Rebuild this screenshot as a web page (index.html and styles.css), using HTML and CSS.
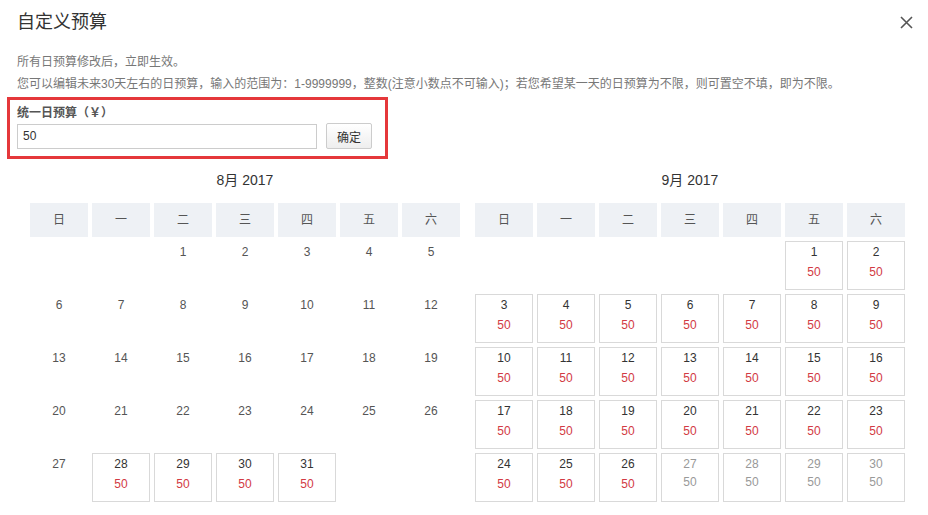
FILE: index.html
```
<!DOCTYPE html>
<html lang="zh-CN">
<head>
  <meta charset="UTF-8" />
  <title>自定义预算</title>
  <link rel="stylesheet" href="styles.css">
</head>
<body>

<div class="dialog">
  <header class="dialog-head">
    <h2>自定义预算</h2>
    <span class="close">
      <svg width="13" height="13" viewBox="0 0 13 13"><path d="M1 1 L12 12 M12 1 L1 12" stroke="#555" stroke-width="1.6" fill="none"/></svg>
    </span>
  </header>

  <p class="tip">所有日预算修改后，立即生效。</p>
  <p class="tip">您可以编辑未来30天左右的日预算，输入的范围为：1-9999999，整数(注意小数点不可输入)；若您希望某一天的日预算为不限，则可置空不填，即为不限。</p>

  <div class="unified">
    <div class="unified-label">统一日预算（￥）</div>
    <div class="unified-row">
      <input class="budget-input" type="text" value="50">
      <button class="btn">确定</button>
    </div>
  </div>

  <div class="months">
    <!-- August -->
    <div class="month">
      <div class="month-title">8月 2017</div>
      <div class="grid">
        <div class="wk">日</div><div class="wk">一</div><div class="wk">二</div><div class="wk">三</div><div class="wk">四</div><div class="wk">五</div><div class="wk">六</div>

        <div class="day"></div><div class="day"></div>
        <div class="day"><span class="num">1</span></div>
        <div class="day"><span class="num">2</span></div>
        <div class="day"><span class="num">3</span></div>
        <div class="day"><span class="num">4</span></div>
        <div class="day"><span class="num">5</span></div>

        <div class="day"><span class="num">6</span></div>
        <div class="day"><span class="num">7</span></div>
        <div class="day"><span class="num">8</span></div>
        <div class="day"><span class="num">9</span></div>
        <div class="day"><span class="num">10</span></div>
        <div class="day"><span class="num">11</span></div>
        <div class="day"><span class="num">12</span></div>

        <div class="day"><span class="num">13</span></div>
        <div class="day"><span class="num">14</span></div>
        <div class="day"><span class="num">15</span></div>
        <div class="day"><span class="num">16</span></div>
        <div class="day"><span class="num">17</span></div>
        <div class="day"><span class="num">18</span></div>
        <div class="day"><span class="num">19</span></div>

        <div class="day"><span class="num">20</span></div>
        <div class="day"><span class="num">21</span></div>
        <div class="day"><span class="num">22</span></div>
        <div class="day"><span class="num">23</span></div>
        <div class="day"><span class="num">24</span></div>
        <div class="day"><span class="num">25</span></div>
        <div class="day"><span class="num">26</span></div>

        <div class="day"><span class="num">27</span></div>
        <div class="day on"><span class="num">28</span><span class="val">50</span></div>
        <div class="day on"><span class="num">29</span><span class="val">50</span></div>
        <div class="day on"><span class="num">30</span><span class="val">50</span></div>
        <div class="day on"><span class="num">31</span><span class="val">50</span></div>
        <div class="day"></div><div class="day"></div>
      </div>
    </div>

    <!-- September -->
    <div class="month">
      <div class="month-title">9月 2017</div>
      <div class="grid">
        <div class="wk">日</div><div class="wk">一</div><div class="wk">二</div><div class="wk">三</div><div class="wk">四</div><div class="wk">五</div><div class="wk">六</div>

        <div class="day"></div><div class="day"></div><div class="day"></div><div class="day"></div><div class="day"></div>
        <div class="day on"><span class="num">1</span><span class="val">50</span></div>
        <div class="day on"><span class="num">2</span><span class="val">50</span></div>

        <div class="day on"><span class="num">3</span><span class="val">50</span></div>
        <div class="day on"><span class="num">4</span><span class="val">50</span></div>
        <div class="day on"><span class="num">5</span><span class="val">50</span></div>
        <div class="day on"><span class="num">6</span><span class="val">50</span></div>
        <div class="day on"><span class="num">7</span><span class="val">50</span></div>
        <div class="day on"><span class="num">8</span><span class="val">50</span></div>
        <div class="day on"><span class="num">9</span><span class="val">50</span></div>

        <div class="day on"><span class="num">10</span><span class="val">50</span></div>
        <div class="day on"><span class="num">11</span><span class="val">50</span></div>
        <div class="day on"><span class="num">12</span><span class="val">50</span></div>
        <div class="day on"><span class="num">13</span><span class="val">50</span></div>
        <div class="day on"><span class="num">14</span><span class="val">50</span></div>
        <div class="day on"><span class="num">15</span><span class="val">50</span></div>
        <div class="day on"><span class="num">16</span><span class="val">50</span></div>

        <div class="day on"><span class="num">17</span><span class="val">50</span></div>
        <div class="day on"><span class="num">18</span><span class="val">50</span></div>
        <div class="day on"><span class="num">19</span><span class="val">50</span></div>
        <div class="day on"><span class="num">20</span><span class="val">50</span></div>
        <div class="day on"><span class="num">21</span><span class="val">50</span></div>
        <div class="day on"><span class="num">22</span><span class="val">50</span></div>
        <div class="day on"><span class="num">23</span><span class="val">50</span></div>

        <div class="day on"><span class="num">24</span><span class="val">50</span></div>
        <div class="day on"><span class="num">25</span><span class="val">50</span></div>
        <div class="day on"><span class="num">26</span><span class="val">50</span></div>
        <div class="day off"><span class="num">27</span><span class="val">50</span></div>
        <div class="day off"><span class="num">28</span><span class="val">50</span></div>
        <div class="day off"><span class="num">29</span><span class="val">50</span></div>
        <div class="day off"><span class="num">30</span><span class="val">50</span></div>
      </div>
    </div>
  </div>
</div>

</body>
</html>
```

FILE: styles.css
```
body {
  margin: 0;
  background: #fff;
  color: #333;
  font-family: "Liberation Sans", "Noto Sans CJK SC", sans-serif;
  font-size: 12px;
}

.dialog {
  padding: 0 15px 0 17px;
}

.dialog-head {
  display: flex;
  justify-content: space-between;
  align-items: center;
  height: 44px;
}

.dialog-head h2 {
  margin: 0;
  font-size: 18px;
  font-weight: normal;
  color: #333;
  line-height: 44px;
}

.close {
  display: flex;
  margin-top: 1px;
  cursor: pointer;
}

.tip {
  margin: 0;
  line-height: 22px;
  color: #777;
}

.dialog-head + .tip {
  margin-top: 7px;
}

.unified {
  width: 368px;
  margin: 2px 0 0 -10px;
  padding: 4px 0 7px 7px;
  border: 3px solid #e5383b;
}

.unified-label {
  line-height: 18px;
  color: #555;
  font-weight: bold;
  margin-bottom: 1px;
}

.unified-row {
  display: flex;
  align-items: center;
  gap: 9px;
}

.budget-input {
  box-sizing: border-box;
  width: 300px;
  height: 25px;
  margin: 0;
  padding: 0 5px;
  border: 1px solid #ccc;
  font: inherit;
  color: #333;
}

.btn {
  box-sizing: border-box;
  width: 46px;
  height: 26px;
  margin: 0;
  padding: 0;
  border: 1px solid #ccc;
  border-radius: 2px;
  background: linear-gradient(#fff, #eee);
  font: inherit;
  color: #333;
  cursor: pointer;
}

.months {
  display: flex;
  gap: 15px;
  margin-top: 11px;
  padding-left: 13px;
}

.month-title {
  text-align: center;
  font-size: 14px;
  line-height: 20px;
  color: #333;
  margin-bottom: 13px;
}

.grid {
  display: grid;
  grid-template-columns: repeat(7, 58px);
  grid-template-rows: 34px repeat(5, 49px);
  gap: 4px;
}

.grid .wk {
  line-height: 34px;
  text-align: center;
  background: #eef1f5;
  color: #555;
}

.day {
  box-sizing: border-box;
  border: 1px solid transparent;
  display: flex;
  flex-direction: column;
  align-items: center;
  color: #555;
}

.day .num {
  line-height: 20px;
}

.day .val {
  line-height: 20px;
  color: #d23a44;
}

.day.on {
  border-color: #d9d9d9;
  color: #333;
}

.day.off {
  border-color: #d9d9d9;
  color: #999;
}

.day.off .val {
  color: #999;
  line-height: 16px;
}
```
